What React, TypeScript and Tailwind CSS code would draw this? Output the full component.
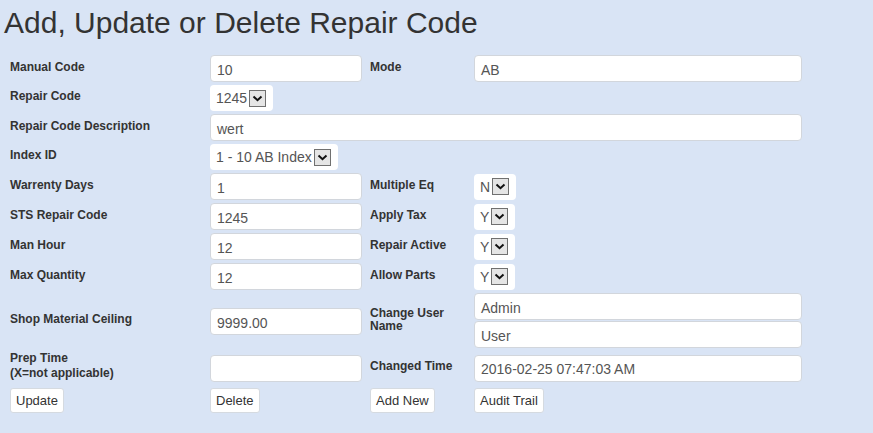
import React from 'react';

const font = { fontFamily: '"Liberation Sans", Arial, sans-serif' };

function Label({ children }: { children: React.ReactNode }) {
  return <div className="pb-[4px] text-[12px] font-bold leading-[14px] text-[#333]">{children}</div>;
}

function TextBox({ value, wide }: { value: string; wide?: boolean }) {
  return (
    <div
      className={`flex h-[27px] items-center rounded-[4px] border border-[#d2d6dc] bg-white px-[6px] pt-[3px] text-[14px] text-[#555] ${
        wide ? 'w-[328px]' : 'w-[152px]'
      }`}
    >
      {value}
    </div>
  );
}

function Chevron() {
  return (
    <span className="flex h-[17px] w-[17px] items-center justify-center border border-[#707070] bg-[#e5e5e5]">
      <svg width="11" height="7" viewBox="0 0 11 7">
        <path d="M1.5 1.5 L5.5 5.2 L9.5 1.5" fill="none" stroke="#111" strokeWidth="2" />
      </svg>
    </span>
  );
}

function SelectBox({ value }: { value: string }) {
  return (
    <div className="flex h-[26px] w-fit items-center gap-[2px] rounded-[4px] bg-white pl-[6px] pr-[7px] text-[14px] text-[#555]">
      <span className="pt-[1px]">{value}</span>
      <Chevron />
    </div>
  );
}

function Btn({ children }: { children: React.ReactNode }) {
  return (
    <button className="h-[25px] rounded-[3px] border border-[#d5dae0] bg-white px-[5px] text-[13px] text-[#333]">
      {children}
    </button>
  );
}

export default function App() {
  return (
    <div className="h-[433px] w-[873px] bg-[#d9e4f5] text-[#333]" style={font}>
      <h1 className="pl-[4px] pt-[6px] text-[30px] leading-[33px] text-[#333]">Add, Update or Delete Repair Code</h1>

      <div className="mt-[16px] grid grid-cols-[200px_160px_104px_330px] items-center gap-y-[3px] pl-[10px]">
        <Label>Manual Code</Label>
        <TextBox value="10" />
        <Label>Mode</Label>
        <TextBox value="AB" wide />

        <Label>Repair Code</Label>
        <div className="col-span-3">
          <SelectBox value="1245" />
        </div>

        <Label>Repair Code Description</Label>
        <div className="col-span-3">
          <div className="flex h-[27px] w-[592px] items-center rounded-[4px] border border-[#d2d6dc] bg-white px-[6px] pt-[3px] text-[14px] text-[#555]">
            wert
          </div>
        </div>

        <Label>Index ID</Label>
        <div className="col-span-3">
          <SelectBox value="1 - 10 AB Index" />
        </div>

        <Label>Warrenty Days</Label>
        <TextBox value="1" />
        <Label>Multiple Eq</Label>
        <SelectBox value="N" />

        <Label>STS Repair Code</Label>
        <TextBox value="1245" />
        <Label>Apply Tax</Label>
        <SelectBox value="Y" />

        <Label>Man Hour</Label>
        <TextBox value="12" />
        <Label>Repair Active</Label>
        <SelectBox value="Y" />

        <Label>Max Quantity</Label>
        <TextBox value="12" />
        <Label>Allow Parts</Label>
        <SelectBox value="Y" />

        <div>
          <Label>Shop Material Ceiling</Label>
        </div>
        <div className="pt-[2px]">
          <TextBox value="9999.00" />
        </div>
        <div className="pt-[2px]">
          <Label>
            <div className="leading-[13px]">Change User</div>
            <div className="leading-[13px]">Name</div>
          </Label>
        </div>
        <div className="flex flex-col gap-[1px]">
          <TextBox value="Admin" wide />
          <TextBox value="User" wide />
        </div>

        <div>
          <Label>
            <div className="leading-[15px]">Prep Time</div>
            <div className="leading-[15px]">(X=not applicable)</div>
          </Label>
        </div>
        <div>
          <TextBox value="" />
        </div>
        <div>
          <Label>Changed Time</Label>
        </div>
        <div>
          <TextBox value="2016-02-25 07:47:03 AM" wide />
        </div>

        <div>
          <Btn>Update</Btn>
        </div>
        <div>
          <Btn>Delete</Btn>
        </div>
        <div>
          <Btn>Add New</Btn>
        </div>
        <div>
          <Btn>Audit Trail</Btn>
        </div>
      </div>
    </div>
  );
}
